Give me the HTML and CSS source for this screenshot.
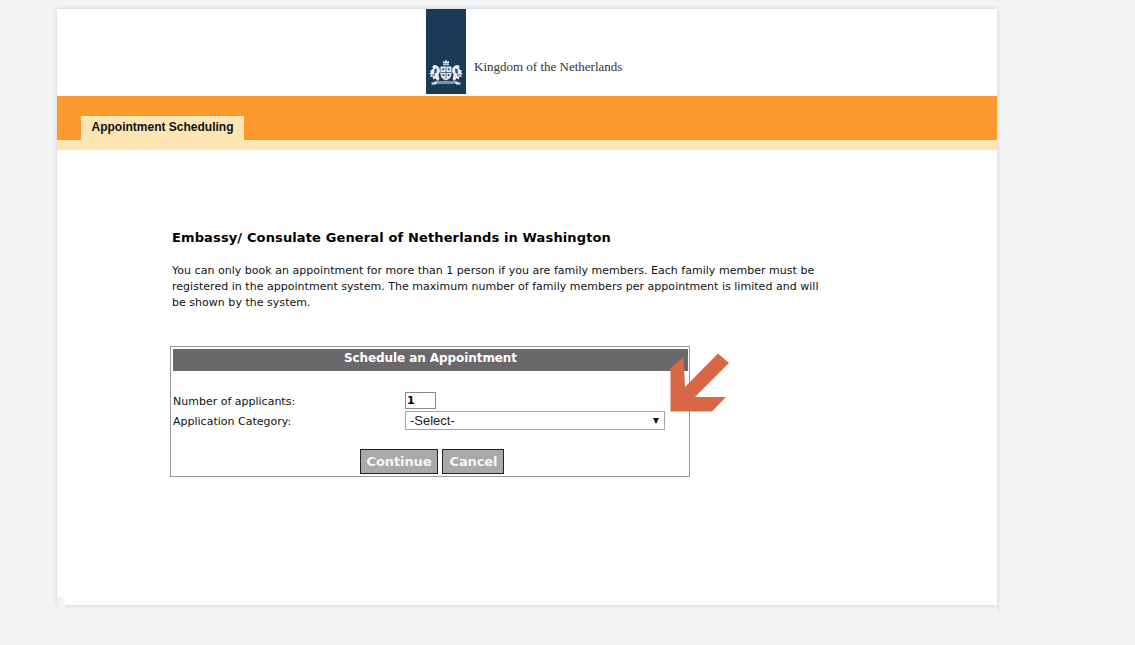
FILE: index.html
```html
<!DOCTYPE html>
<html lang="en">
<head>
<meta charset="utf-8">
<title>Appointment Scheduling</title>
<link rel="stylesheet" href="styles.css">
</head>
<body>
<div class="page">
  <header class="brand">
    <div class="logo-bar">
      <svg class="crest" viewBox="0 0 36 28" width="36" height="28" aria-hidden="true">
        <g fill="#e9edf1">
          <path d="M15.3 4.6 L14.8 1.8 L16.6 3 L18 .4 L19.4 3 L21.2 1.8 L20.7 4.6 Z"/>
          <rect x="15" y="5.2" width="6" height="1"/>
          <path d="M12.5 7.5 H23.5 V15 Q23.5 19.5 18 21.5 Q12.5 19.5 12.5 15 Z"/>
          <path d="M11.5 9 L9 6.5 L6 6 L4.2 7.6 L5.2 9.2 L3.6 11 L2 11.4 L3 13.2 L1 15 L3.4 15.6 L2 18 L4.8 17.6 L5 20.4 L7.6 19.2 L8.6 21.4 L10.6 21.4 L11.4 19.4 L10.4 16 L12 12.5 Z"/>
          <path d="M24.5 9 L27 6.5 L30 6 L31.8 7.6 L30.8 9.2 L32.4 11 L34 11.4 L33 13.2 L35 15 L32.6 15.6 L34 18 L31.2 17.6 L31 20.4 L28.4 19.2 L27.4 21.4 L25.4 21.4 L24.6 19.4 L25.6 16 L24 12.5 Z"/>
          <path d="M6 22.6 H30 L29 24.4 H7 Z"/>
          <path d="M3.6 23.4 H8 V25.6 H3.6 Z M28 23.4 H32.4 V25.6 H28 Z"/>
        </g>
        <g fill="#34506d">
          <rect x="17.6" y="8" width=".8" height="12"/>
          <rect x="13" y="13" width="10" height=".8"/>
          <circle cx="15.2" cy="10.4" r="1.1"/>
          <circle cx="20.8" cy="10.4" r="1.1"/>
          <circle cx="15.4" cy="16.2" r="1.1"/>
          <circle cx="20.6" cy="16.2" r="1.1"/>
          <path d="M6.5 10 L9 9.5 L8.4 14 L6 15 Z M29.5 10 L27 9.5 L27.6 14 L30 15 Z"/>
          <path d="M4.5 15 L7 16 L6.4 17 L4.5 16.4 Z M31.5 15 L29 16 L29.6 17 L31.5 16.4 Z"/>
          <rect x="9" y="23.2" width="18" height=".6"/>
        </g>
      </svg>
    </div>
    <span class="brand-name">Kingdom of the Netherlands</span>
  </header>
  <nav class="nav-band">
    <div class="tab">Appointment Scheduling</div>
  </nav>
  <div class="nav-strip"></div>
  <main class="content">
    <h1 class="title">Embassy/ Consulate General of Netherlands in Washington</h1>
    <p class="intro">You can only book an appointment for more than 1 person if you are family members. Each family member must be registered in the appointment system. The maximum number of family members per appointment is limited and will be shown by the system.</p>
    <form class="panel">
      <div class="panel-head">Schedule an Appointment</div>
      <div class="fields">
        <div class="field">
          <label class="field-label" for="n">Number of applicants:</label>
          <input class="count" id="n" type="text" value="1">
        </div>
        <div class="field">
          <label class="field-label" for="c">Application Category:</label>
          <div class="select" id="c"><span>-Select-</span><span class="caret"></span></div>
        </div>
      </div>
      <div class="actions">
        <button class="btn" type="button">Continue</button>
        <button class="btn" type="button">Cancel</button>
      </div>
    </form>
  </main>
  <svg class="arrow" viewBox="0 0 60 60" width="60" height="60" aria-hidden="true">
    <path fill="#d96644" d="M0.5 58.5 V15 L13.5 4 L15 34 L48 0.5 L59 10 L25 44 H56 L42 58.5 Z"/>
  </svg>
  <div class="edge edge-left"></div>
  <div class="edge edge-right"></div>
</div>
</body>
</html>
```
FILE: styles.css
```css
* { box-sizing: border-box; }
html, body { margin: 0; height: 100%; }
body {
  background: #f3f4f6;
  padding: 9px 0 0 57px;
  font-family: "DejaVu Sans", Verdana, sans-serif;
  color: #111;
  overflow: hidden;
}
.page {
  position: relative;
  width: 940px;
  height: 596px;
  background: #fff;
  box-shadow: 0 0 5px rgba(0, 0, 0, 0.16);
}
.brand {
  height: 87px;
  padding-left: 369px;
  display: flex;
  align-items: flex-start;
}
.logo-bar {
  width: 40px;
  height: 85px;
  background: #1b3a58;
  display: flex;
  justify-content: center;
  align-items: flex-end;
  padding-bottom: 7px;
}
.crest { filter: blur(0.3px); }
.brand-name {
  margin: 49px 0 0 8px;
  font: 13px/18px "Liberation Serif", serif;
  color: #333;
  white-space: nowrap;
}
.nav-band {
  height: 44px;
  background: #fa9a2c;
  padding: 20px 0 0 24px;
}
.tab {
  width: 163px;
  height: 24px;
  background: #fde6b4;
  font: bold 12px/22px "Liberation Sans", Arial, sans-serif;
  text-align: center;
  color: #111;
}
.nav-strip { height: 10px; background: #fde6b4; }
.content { padding: 79px 0 0 115px; }
.title {
  margin: 0;
  font-size: 13px;
  line-height: 18px;
  font-weight: bold;
  letter-spacing: 0.13px;
  color: #000;
}
.intro {
  width: 650px;
  margin: 16px 0 0;
  font-size: 11px;
  line-height: 16px;
  letter-spacing: 0.025px;
  color: #111;
}
.panel {
  width: 520px;
  height: 131px;
  margin: 35px 0 0 -2px;
  border: 1px solid #9a9a9a;
  padding: 2px 1px 0 2px;
}
.panel-head {
  height: 22px;
  background: #6b686b;
  color: #fff;
  font-size: 12px;
  font-weight: bold;
  line-height: 18px;
  letter-spacing: -0.08px;
  text-align: center;
}
.fields { padding-top: 20px; }
.field {
  display: flex;
  align-items: center;
  height: 19px;
  margin-bottom: 1px;
}
.field-label {
  width: 232px;
  padding-top: 2px;
  font-size: 11px;
  color: #111;
}
.count {
  width: 31px;
  height: 17px;
  border: 1px solid #8a8a8a;
  padding: 0 1px;
  font: bold 11px "DejaVu Sans", sans-serif;
  color: #000;
  outline: none;
}
.select {
  width: 260px;
  height: 19px;
  border: 1px solid #a5a5a5;
  padding: 0 5px 0 4px;
  display: flex;
  align-items: center;
  justify-content: space-between;
  font: 13px "Liberation Sans", Arial, sans-serif;
  color: #222;
}
.caret {
  width: 0;
  height: 0;
  border-left: 3.5px solid transparent;
  border-right: 3.5px solid transparent;
  border-top: 6px solid #111;
}
.actions {
  margin-top: 19px;
  display: flex;
  justify-content: center;
  gap: 4px;
  padding-left: 3px;
}
.btn {
  height: 25px;
  padding: 0 6px;
  background: #a9a9a9;
  border: 1px solid #222;
  color: #f5f5f5;
  font: bold 13px "DejaVu Sans", sans-serif;
  letter-spacing: -0.1px;
}
.arrow {
  position: absolute;
  left: 613px;
  top: 344px;
}
.edge { position: absolute; }
.edge-left {
  left: 0;
  top: 588px;
  width: 8px;
  height: 15px;
  background: linear-gradient(to right, #eef0f2, #f6f7f9);
}
.edge-right {
  left: 940px;
  top: 596px;
  width: 3px;
  height: 7px;
  background: #e6e8ea;
}
```
